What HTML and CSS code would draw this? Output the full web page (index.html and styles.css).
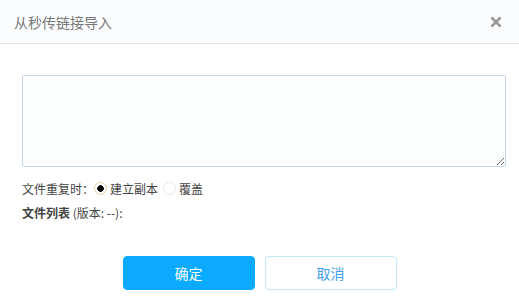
FILE: index.html
```html
<!DOCTYPE html>
<html lang="zh-CN">
<head>
    <meta charset="UTF-8">
    <meta name="viewport" content="width=device-width, initial-scale=1.0">
    <title>从秒传链接导入</title>
    <link rel="stylesheet" href="styles.css">
</head>
<body>
    <div class="dialog">
        <div class="dialog-header">
            <h3>从秒传链接导入</h3>
            <span class="close">
                <svg width="12" height="12" viewBox="0 0 12 12">
                    <path d="M1.5 1.5 L10.5 10.5 M10.5 1.5 L1.5 10.5" stroke="#999" stroke-width="2.6" stroke-linecap="butt"/>
                </svg>
            </span>
        </div>
        <div class="dialog-body">
            <textarea class="links"></textarea>
            <div class="options">
                <span>文件重复时：</span>
                <label class="radio checked"><span class="dot"></span>建立副本</label>
                <label class="radio"><span class="dot"></span>覆盖</label>
            </div>
            <div class="file-list"><strong>文件列表</strong> (版本: --):</div>
        </div>
        <div class="dialog-footer">
            <button class="btn btn-primary">确定</button>
            <button class="btn btn-default">取消</button>
        </div>
    </div>
</body>
</html>
```
FILE: styles.css
```css
body {
    margin: 0;
    padding: 0;
    background-color: #fff;
    font-family: "Noto Sans CJK SC", "Liberation Sans", sans-serif;
    color: #424e67;
}
.dialog {
    width: 519px;
    height: 305px;
    background-color: #fff;
}
.dialog-header {
    height: 43px;
    background-color: #fafcfd;
    border-bottom: 1px solid #e2e5e8;
    display: flex;
    align-items: center;
    justify-content: space-between;
    padding: 0 17px 0 14px;
}
.dialog-header h3 {
    margin: 0;
    font-size: 14px;
    font-weight: normal;
    color: #777;
}
.close {
    display: flex;
    cursor: pointer;
}
.dialog-body {
    padding: 31px 13px 0 22px;
}
.links {
    display: block;
    box-sizing: border-box;
    width: 484px;
    height: 92px;
    margin: 0;
    border: 1px solid #c6d6e6;
    background-color: #fdfefe;
    border-radius: 2px;
    resize: vertical;
}
.options {
    display: flex;
    align-items: center;
    font-size: 12px;
    color: #444;
    margin-top: 12px;
    height: 18px;
}
.radio {
    display: flex;
    align-items: center;
    margin-right: 5px;
}
.dot {
    box-sizing: border-box;
    width: 13px;
    height: 13px;
    border-radius: 50%;
    border: 1px solid #e6e6e6;
    background-color: #fff;
    margin-right: 3px;
}
.radio.checked .dot {
    border: 1px solid #e4cfa4;
    background: radial-gradient(circle, #000 0 3px, #fff 3.5px);
}
.file-list {
    font-size: 12px;
    color: #444;
    margin-top: 7px;
}
.file-list strong {
    font-weight: bold;
}
.dialog-footer {
    display: flex;
    justify-content: center;
    gap: 10px;
    margin-top: 35px;
}
.btn {
    width: 132px;
    height: 34px;
    border-radius: 4px;
    font-family: "Noto Sans CJK SC", sans-serif;
    font-size: 14px;
    cursor: pointer;
}
.btn-primary {
    background-color: #09aaff;
    border: 1px solid #09aaff;
    color: #fff;
}
.btn-default {
    background-color: #fff;
    border: 1px solid #c3e6fb;
    color: #3e9ee8;
}
```
